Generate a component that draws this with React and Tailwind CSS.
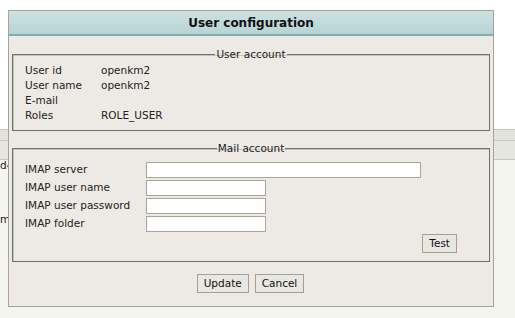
import React from "react";

const font = { fontFamily: '"DejaVu Sans", Verdana, sans-serif' };

const Field = ({ width }) => (
  <input
    type="text"
    className={`h-4 border border-[#a9a697] bg-white ${width}`}
  />
);

const Button = ({ children }) => (
  <button className="h-[19px] px-[6px] border border-[#a3a192] bg-[#e8e7e2] text-[10.5px] text-[#111]">
    {children}
  </button>
);

const App = () => {
  return (
    <div className="relative w-[515px] h-[318px] overflow-hidden bg-[#f5f5ef]" style={font}>
      {/* page behind the dialog */}
      <div className="h-[129px] bg-white" />
      <div className="h-[11px] border-t border-[#c8c8c0] bg-[#e3e3dd]" />
      <div className="h-[20px] border-t border-[#c8c8c0] bg-[#e6e6e0] border-b" />
      <div className="relative text-[10.5px] text-[#222]">
        <span className="absolute left-0 top-[-2px]">d4</span>
        <span className="absolute left-0 top-[52px]">m</span>
      </div>

      {/* dialog */}
      <div className="absolute left-[8px] top-[10px] w-[486px] h-[297px] border border-[#a7a493] bg-[#edeae5] flex flex-col">
        <div className="h-[25px] shrink-0 bg-gradient-to-b from-[#cde2e2] to-[#b7d4d4] border-b-2 border-[#7db1b1] flex items-center justify-center">
          <span className="text-[12px] font-bold text-[#111]">User configuration</span>
        </div>

        <div className="px-[3px] pt-[12px] flex flex-col gap-[11px] text-[10.5px] text-[#222]">
          <fieldset className="border border-[#6f6f6f] shadow-[inset_1px_1px_0_#c4c2bc] h-[83px] px-[12px]">
            <legend className="mx-auto px-[1px] leading-[12px]">User account</legend>
            <div className="grid grid-cols-[76px_1fr] mt-[3px] leading-[15px]">
              <span>User id</span>
              <span>openkm2</span>
              <span>User name</span>
              <span>openkm2</span>
              <span>E-mail</span>
              <span></span>
              <span>Roles</span>
              <span>ROLE_USER</span>
            </div>
          </fieldset>

          <fieldset className="border border-[#6f6f6f] shadow-[inset_1px_1px_0_#c4c2bc] h-[120px] px-[12px]">
            <legend className="mx-auto px-[1px] leading-[12px]">Mail account</legend>
            <div className="grid grid-cols-[121px_1fr] mt-[8px] gap-y-[2px] items-center">
              <span>IMAP server</span>
              <Field width="w-[275px]" />
              <span>IMAP user name</span>
              <Field width="w-[120px]" />
              <span>IMAP user password</span>
              <Field width="w-[120px]" />
              <span>IMAP folder</span>
              <Field width="w-[120px]" />
            </div>
            <div className="flex justify-end mt-[2px] pr-[20px]">
              <Button>Test</Button>
            </div>
          </fieldset>
        </div>

        <div className="flex justify-center gap-[6px] mt-[12px] pr-[1px]">
          <Button>Update</Button>
          <Button>Cancel</Button>
        </div>
      </div>
    </div>
  );
};

export default App;
